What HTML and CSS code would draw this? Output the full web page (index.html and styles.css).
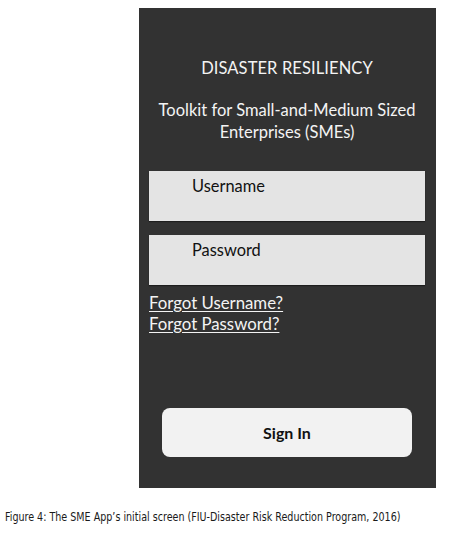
FILE: index.html
```html
<!DOCTYPE html>
<html>
<head>
<meta charset="utf-8">
<link rel="stylesheet" href="styles.css">
</head>
<body>
<div class="page">
  <div class="phone">
    <h1 class="title">DISASTER RESILIENCY</h1>
    <p class="subtitle">Toolkit for Small-and-Medium Sized<br>Enterprises (SMEs)</p>
    <div class="field">Username</div>
    <div class="field field-pw">Password</div>
    <div class="links">
      <a class="link" href="#">Forgot Username?</a>
      <a class="link" href="#">Forgot Password?</a>
    </div>
    <div class="signin">Sign In</div>
  </div>
  <p class="caption">Figure 4: The SME App’s initial screen (FIU-Disaster Risk Reduction Program, 2016)</p>
</div>
</body>
</html>
```
FILE: styles.css
```css
html, body {
  margin: 0;
  padding: 0;
  background: #ffffff;
}
.page {
  width: 459px;
  height: 534px;
  padding-top: 8px;
  box-sizing: border-box;
  overflow: hidden;
}
.phone {
  margin-left: 139px;
  width: 297px;
  height: 480px;
  background: #323232;
  box-sizing: border-box;
  padding: 49px 11px 0 10px;
  display: flex;
  flex-direction: column;
  font-family: Lato, "Open Sans", sans-serif;
  color: #f4f4f4;
}
.title {
  margin: 0;
  font-size: 16.5px;
  font-weight: 400;
  line-height: 22px;
  text-align: center;
  letter-spacing: 0.1px;
}
.subtitle {
  margin: 20px 0 0 0;
  font-size: 16.5px;
  line-height: 22px;
  text-align: center;
}
.field {
  margin-top: 28px;
  height: 50px;
  background: #e4e4e4;
  color: #111;
  font-size: 16.4px;
  line-height: 20px;
  padding: 5px 0 0 43px;
  box-sizing: border-box;
  box-shadow: 0 1px 1px rgba(0,0,0,0.4);
}
.field-pw {
  margin-top: 14px;
}
.links {
  display: flex;
  flex-direction: column;
  align-items: flex-start;
  margin-top: 7px;
}
.link {
  color: #f4f4f4;
  font-size: 16.8px;
  line-height: 21px;
  text-decoration: underline;
  text-underline-offset: 2px;
}
.signin {
  margin: 74px 13px 0 13px;
  height: 49px;
  background: #f2f2f2;
  border-radius: 8px;
  color: #111;
  font-weight: 700;
  font-size: 16px;
  display: flex;
  align-items: center;
  justify-content: center;
}
.caption {
  margin: 22px 0 0 5px;
  font-family: "DejaVu Sans", sans-serif;
  font-stretch: condensed;
  font-size: 12.5px;
  line-height: 14px;
  color: #1a1a1a;
  white-space: nowrap;
  transform: scaleX(0.85);
  transform-origin: left center;
}
```
